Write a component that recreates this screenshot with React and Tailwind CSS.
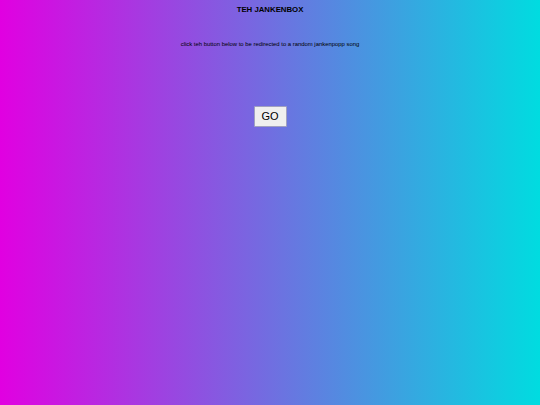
export default function App() {
  return (
    <div className="min-h-[405px] w-full bg-[linear-gradient(to_right,#e100e1,#00dce0)] font-['Liberation_Sans',Arial,sans-serif] text-black">
      <div className="flex flex-col items-center">
        <h1 className="mt-[5px] text-[7.8px] font-bold leading-[10px]">TEH JANKENBOX</h1>
        <p className="mt-[25px] text-[5.9px] leading-[8px]">
          click teh button below to be redirected to a random jankenpopp song
        </p>
        <button className="mt-[58px] h-[21px] w-[33px] rounded-[1px] border border-[#a0a0c0] bg-[#efefef] text-[11px] leading-none">
          GO
        </button>
      </div>
    </div>
  );
}
